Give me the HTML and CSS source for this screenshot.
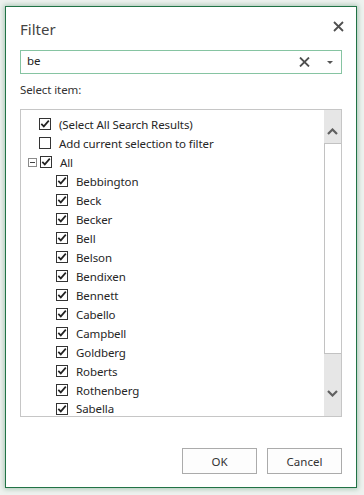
FILE: index.html
```html
<!DOCTYPE html>
<html>
<head>
<meta charset="utf-8">
<link rel="stylesheet" href="styles.css">
</head>
<body>
<div class="dialog">
  <div class="header">
    <div class="title">Filter</div>
    <svg class="close" width="11" height="11" viewBox="0 0 11 11"><path d="M1 1L10 10M10 1L1 10" stroke="#505050" stroke-width="1.8"/></svg>
  </div>
  <div class="search">
    <span class="search-text">be</span>
    <svg class="clear" width="11" height="10" viewBox="0 0 11 10"><path d="M1 0.5L10 9.5M10 0.5L1 9.5" stroke="#505050" stroke-width="1.8"/></svg>
    <svg class="drop" width="6" height="3" viewBox="0 0 6 3"><path d="M0 0H6L3 3Z" fill="#555"/></svg>
  </div>
  <div class="label">Select item:</div>
  <div class="list">
    <div class="items">
      <div class="row lvl0"><span class="cb on"></span><span>(Select All Search Results)</span></div>
      <div class="row lvl0"><span class="cb"></span><span>Add current selection to filter</span></div>
      <div class="row lvl-tree"><span class="minus"></span><span class="cb on"></span><span>All</span></div>
      <div class="row lvl1"><span class="cb on"></span><span>Bebbington</span></div>
      <div class="row lvl1"><span class="cb on"></span><span>Beck</span></div>
      <div class="row lvl1"><span class="cb on"></span><span>Becker</span></div>
      <div class="row lvl1"><span class="cb on"></span><span>Bell</span></div>
      <div class="row lvl1"><span class="cb on"></span><span>Belson</span></div>
      <div class="row lvl1"><span class="cb on"></span><span>Bendixen</span></div>
      <div class="row lvl1"><span class="cb on"></span><span>Bennett</span></div>
      <div class="row lvl1"><span class="cb on"></span><span>Cabello</span></div>
      <div class="row lvl1"><span class="cb on"></span><span>Campbell</span></div>
      <div class="row lvl1"><span class="cb on"></span><span>Goldberg</span></div>
      <div class="row lvl1"><span class="cb on"></span><span>Roberts</span></div>
      <div class="row lvl1"><span class="cb on"></span><span>Rothenberg</span></div>
      <div class="row lvl1 last"><span class="cb on"></span><span>Sabella</span></div>
    </div>
    <div class="scrollbar">
      <div class="sb-up"><svg width="11" height="7" viewBox="0 0 11 7"><path d="M1 6L5.5 1.5L10 6" fill="none" stroke="#606060" stroke-width="2.2"/></svg></div>
      <div class="sb-thumb"></div>
      <div class="sb-rest"><svg width="11" height="7" viewBox="0 0 11 7"><path d="M1 1L5.5 5.5L10 1" fill="none" stroke="#606060" stroke-width="2.2"/></svg></div>
    </div>
  </div>
  <div class="buttons">
    <div class="btn">OK</div>
    <div class="btn">Cancel</div>
  </div>
</div>
</body>
</html>
```
FILE: styles.css
```css
html, body {
  margin: 0;
  padding: 0;
}
body {
  background: #eef2ef;
  width: 364px;
  height: 495px;
  overflow: hidden;
  font-family: "Noto Sans", sans-serif;
  font-size: 11.5px;
  letter-spacing: -0.1px;
  color: #262626;
}
.dialog {
  margin: 6px 0 0 5px;
  width: 322px;
  height: 480px;
  border: 1px solid #217346;
  background: #fff;
  box-shadow: 0 0 5px 1px rgba(33, 115, 70, 0.35);
  padding: 0 14px;
  display: flex;
  flex-direction: column;
}
.dialog > * { flex: none; }
.header {
  display: flex;
  align-items: flex-start;
  justify-content: space-between;
  padding-top: 12px;
  height: 20px;
}
.title {
  font-size: 15px;
  letter-spacing: 0;
  line-height: 20px;
  color: #444;
}
.close {
  margin-top: 2px;
  margin-right: -2px;
  display: block;
}
.search {
  margin-top: 11px;
  height: 22px;
  border: 1px solid #86c4a2;
  display: flex;
  align-items: center;
  padding: 0 8px 0 6px;
}
.search-text {
  flex: 1;
  line-height: 16px;
  padding-bottom: 2px;
  color: #222;
}
.clear { display: block; margin-right: 17px; }
.drop { display: block; }
.label {
  margin-top: 8px;
  line-height: 16px;
  color: #333;
}
.list {
  margin-top: 11px;
  height: 306px;
  border: 1px solid #c6c6c6;
  display: flex;
}
.items {
  flex: 1;
  overflow: hidden;
  padding-top: 5px;
}
.row {
  height: 19px;
  display: flex;
  align-items: center;
  gap: 8px;
  white-space: nowrap;
}
.row.last { height: 17px; align-items: flex-start; padding-top: 1px; }
.lvl0 { padding-left: 18px; }
.lvl1 { padding-left: 35px; }
.lvl-tree { padding-left: 7px; gap: 0; }
.lvl-tree .minus { margin-right: 3px; }
.lvl-tree .cb { margin-right: 8px; }
.cb {
  width: 10px;
  height: 10px;
  border: 1px solid #333;
  background: #fff center / 10px 10px no-repeat;
  flex: none;
  margin-top: -1px;
}
.row.last .cb { margin-top: 2px; }
.cb.on {
  background-image: url("data:image/svg+xml;utf8,<svg xmlns='http://www.w3.org/2000/svg' width='10' height='10' viewBox='0 0 10 10'><path d='M1.3 4.8L3.8 7.4L8.8 1.6' fill='none' stroke='%23222' stroke-width='1.7'/></svg>");
}
.minus {
  width: 7px;
  height: 7px;
  border: 1px solid #8a8a8a;
  flex: none;
  position: relative;
  margin-top: -1px;
}
.minus::after {
  content: "";
  position: absolute;
  left: 1px;
  right: 1px;
  top: 3px;
  height: 1px;
  background: #444;
}
.scrollbar {
  width: 17px;
  background: #e6e6e6;
  display: flex;
  flex-direction: column;
}
.sb-up {
  height: 33px;
  display: flex;
  justify-content: center;
  padding-top: 18px;
  box-sizing: border-box;
}
.sb-up svg, .sb-rest svg { display: block; }
.sb-thumb {
  height: 209px;
  background: #fff;
  border: 1px solid #c2c2c2;
  border-right: 0;
}
.sb-rest {
  flex: 1;
  display: flex;
  justify-content: center;
  padding-top: 36px;
}
.buttons {
  margin-top: 31px;
  display: flex;
  justify-content: flex-end;
  gap: 10px;
}
.btn {
  width: 73px;
  height: 24px;
  border: 1px solid #ababab;
  background: #fdfdfd;
  display: flex;
  align-items: center;
  justify-content: center;
  color: #333;
  letter-spacing: 0;
}
```
